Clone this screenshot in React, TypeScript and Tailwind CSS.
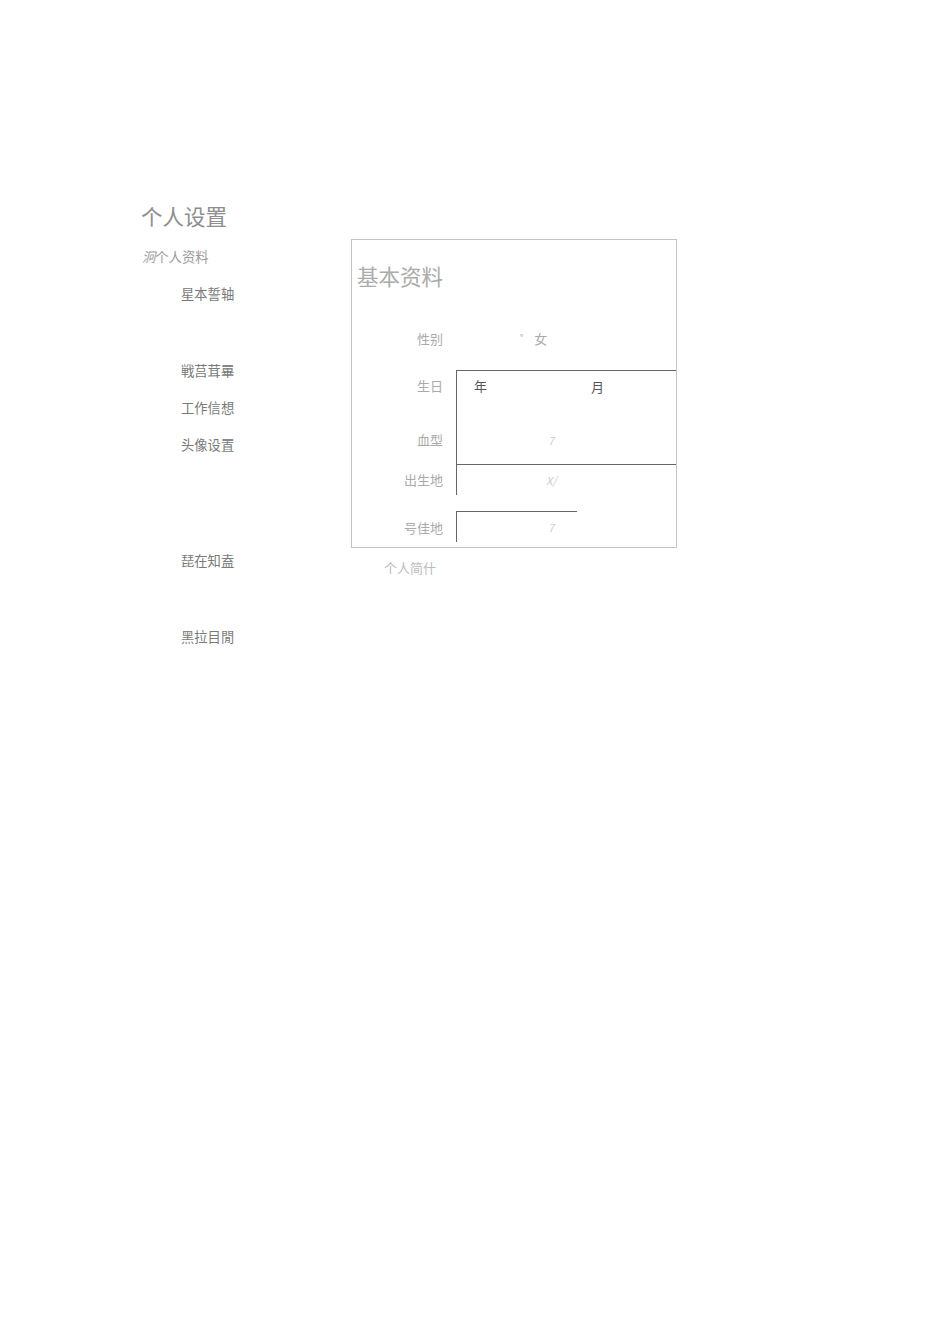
import React from "react";

export default function App() {
  return (
    <div className="min-h-[1344px] w-[950px] bg-white font-['Noto_Sans_CJK_SC','Noto_Sans',sans-serif]">
      <div className="pl-[141px] pt-[202px]">
        <h1 className="text-[21.5px] leading-[28px] text-[#8e8e8e] font-normal">个人设置</h1>
        <div className="mt-[9px] flex">
          {/* sidebar */}
          <nav className="w-[210px] flex flex-col text-[13.3px] leading-[20px] text-[#7a7a7a]">
            <div className="mt-[8px] pl-[1px] text-[#9a9a9a]"><span className="italic">泂</span>个人资料</div>
            <div className="mt-[17px] pl-[40px]">星本誓轴</div>
            <div className="mt-[57px] pl-[40px]">戦莒茸罼</div>
            <div className="mt-[17px] pl-[40px]">工作信想</div>
            <div className="mt-[17px] pl-[40px]">头像设置</div>
            <div className="mt-[96px] pl-[40px]">琵在知盍</div>
            <div className="mt-[56px] pl-[40px]">黑拉目閒</div>
          </nav>
          {/* main */}
          <div className="flex flex-col">
            <section className="w-[326px] h-[309px] border border-[#c4c4c4] flex flex-col">
              <h2 className="pt-[22px] pl-[5px] text-[21.5px] leading-[28px] text-[#ababab] font-normal">基本资料</h2>
              {/* gender */}
              <div className="mt-[39px] flex text-[13px] leading-[20px]">
                <div className="w-[91px] text-right text-[#aaaaaa]">性别</div>
                <div className="ml-[13px] pl-[64px] flex text-[#aaaaaa]">
                  <span className="mt-[3px] text-[9px] leading-[12px] mr-[11px]">°</span>
                  <span>女</span>
                </div>
              </div>
              {/* birthday + blood type */}
              <div className="mt-[21px] flex text-[13px] leading-[20px]">
                <div className="w-[91px] flex flex-col text-right text-[#aaaaaa]">
                  <div className="mt-[6px]">生日</div>
                  <div className="mt-[34px]">血型</div>
                </div>
                <div className="ml-[13px] w-[220px] h-[95px] border-t border-l border-b border-[#666666] flex flex-col">
                  <div className="mt-[5px] flex text-[#555555]">
                    <span className="ml-[17px]">年</span>
                    <span className="ml-[104px] mt-[1px]">月</span>
                  </div>
                  <div className="mt-[33px] pl-[91px] italic text-[11px] text-[#cccccc]">7</div>
                </div>
              </div>
              {/* birthplace */}
              <div className="flex text-[13px] leading-[20px]">
                <div className="w-[91px] pt-[5px] text-right text-[#aaaaaa]">出生地</div>
                <div className="ml-[13px] h-[30px] border-l border-[#666666] pt-[5px] pl-[89px] italic text-[11px] text-[#cccccc]">X/</div>
              </div>
              {/* residence */}
              <div className="mt-[16px] flex text-[13px] leading-[20px]">
                <div className="w-[91px] pt-[7px] text-right text-[#aaaaaa]">号佳地</div>
                <div className="ml-[13px] w-[121px] h-[31px] border-t border-l border-[#666666] pt-[5px] pl-[91px] italic text-[11px] text-[#cccccc]">7</div>
              </div>
            </section>
            <div className="mt-[10px] pl-[33px] text-[13px] leading-[20px] text-[#bbbbbb]">个人简什</div>
          </div>
        </div>
      </div>
    </div>
  );
}
